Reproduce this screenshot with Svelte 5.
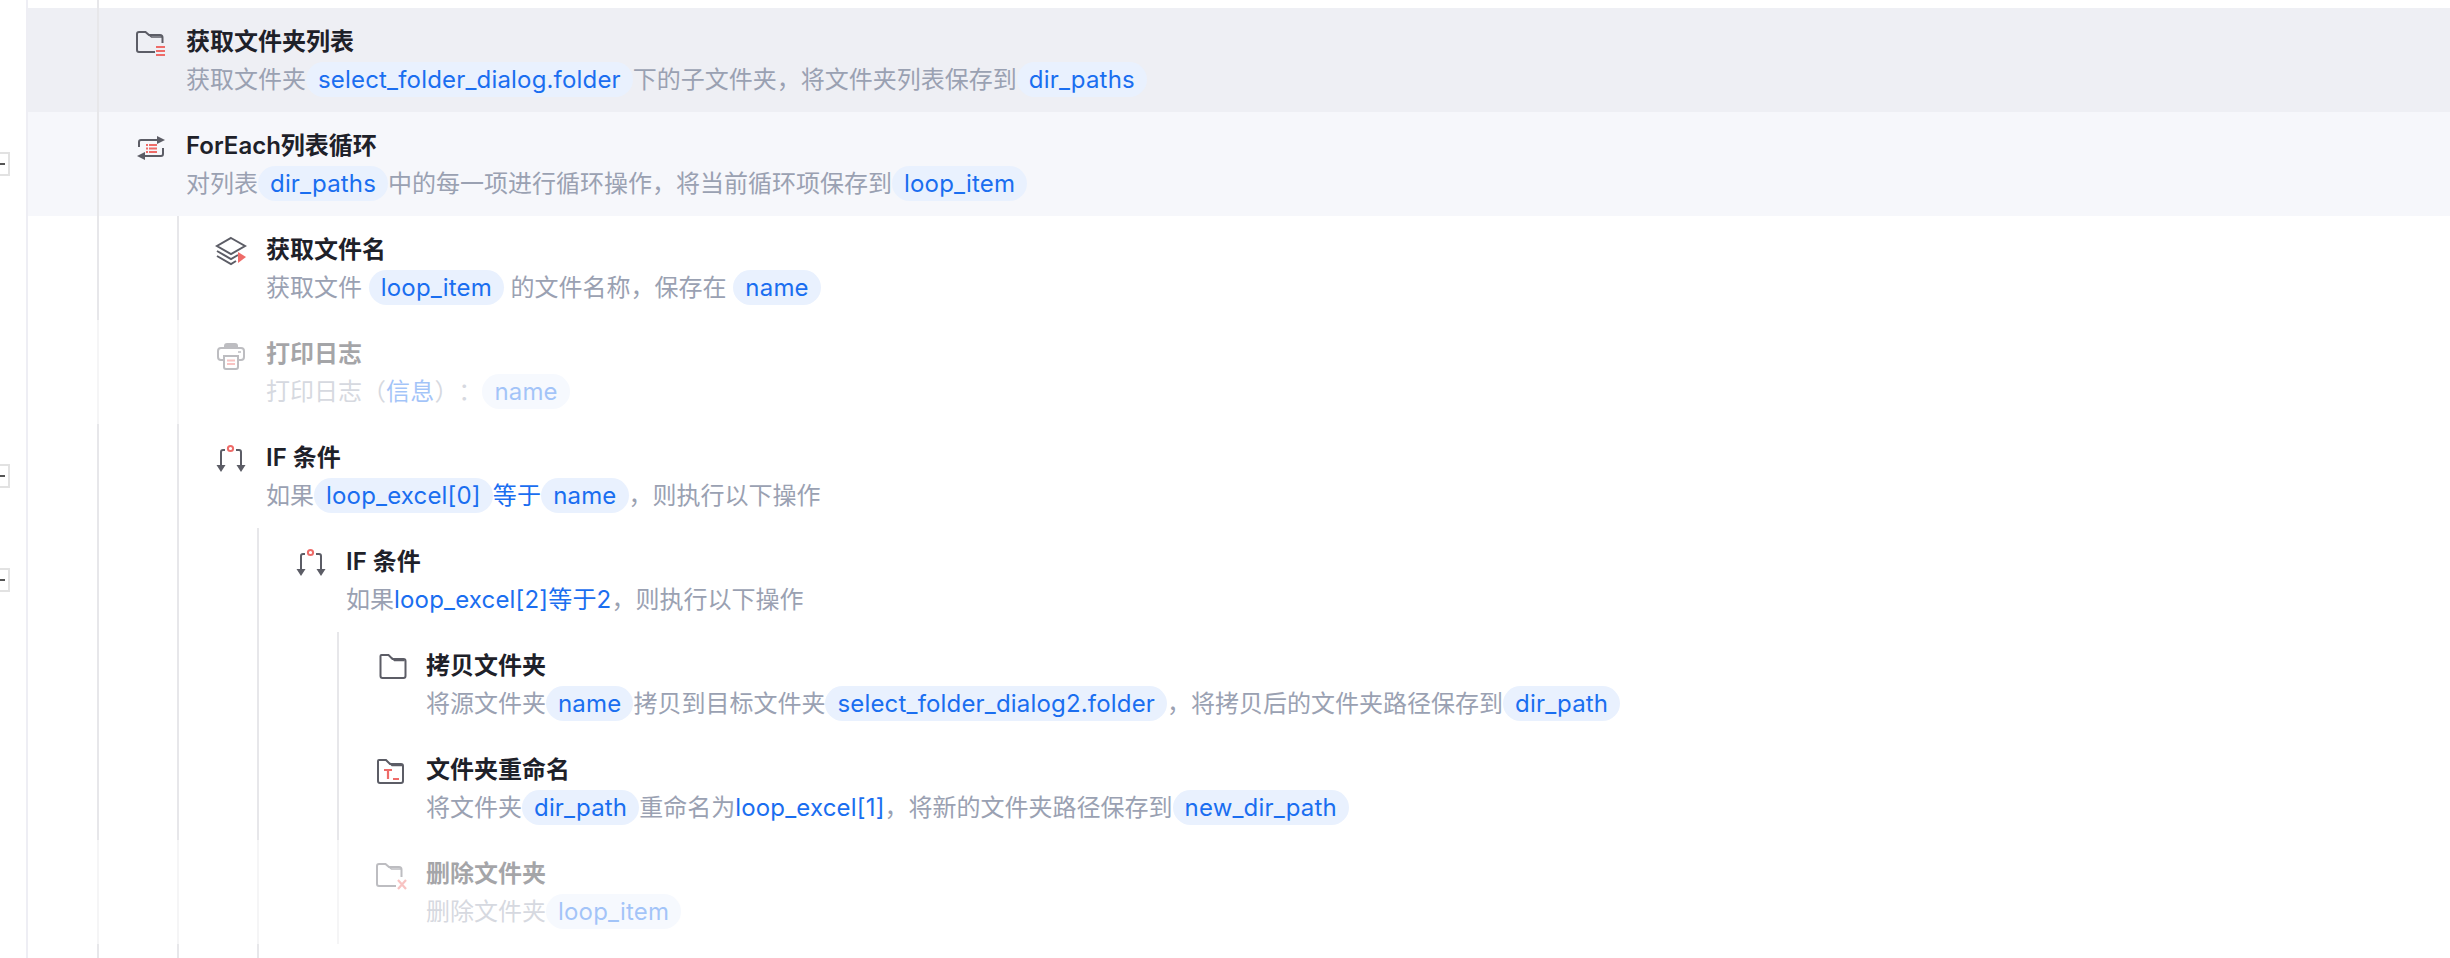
<script>
  // t: text, v: pill, b: plain blue
  const rows = [
    { level: 0, bg: 'sel', icon: 'folderList', title: '获取文件夹列表', desc: [
      ['t', '获取文件夹'], ['v', 'select_folder_dialog.folder'], ['t', '下的子文件夹，将文件夹列表保存到'], ['v', 'dir_paths']
    ] },
    { level: 0, bg: 'hover', fold: true, icon: 'forEach', title: 'ForEach列表循环', desc: [
      ['t', '对列表'], ['v', 'dir_paths'], ['t', '中的每一项进行循环操作，将当前循环项保存到'], ['v', 'loop_item']
    ] },
    { level: 1, icon: 'layers', title: '获取文件名', desc: [
      ['t', '获取文件 '], ['v', 'loop_item'], ['t', ' 的文件名称，保存在 '], ['v', 'name']
    ] },
    { level: 1, off: true, icon: 'printer', title: '打印日志', desc: [
      ['t', '打印日志（'], ['b', '信息'], ['t', '）：'], ['v', 'name']
    ] },
    { level: 1, fold: true, icon: 'ifCond', title: 'IF 条件', desc: [
      ['t', '如果'], ['v', 'loop_excel[0]'], ['b', '等于'], ['v', 'name'], ['t', '，则执行以下操作']
    ] },
    { level: 2, fold: true, icon: 'ifCond', title: 'IF 条件', desc: [
      ['t', '如果'], ['b', 'loop_excel[2]等于2'], ['t', '，则执行以下操作']
    ] },
    { level: 3, icon: 'folder', title: '拷贝文件夹', desc: [
      ['t', '将源文件夹'], ['v', 'name'], ['t', '拷贝到目标文件夹'], ['v', 'select_folder_dialog2.folder'], ['t', '，将拷贝后的文件夹路径保存到'], ['v', 'dir_path']
    ] },
    { level: 3, icon: 'folderRename', title: '文件夹重命名', desc: [
      ['t', '将文件夹'], ['v', 'dir_path'], ['t', '重命名为'], ['b', 'loop_excel[1]'], ['t', '，将新的文件夹路径保存到'], ['v', 'new_dir_path']
    ] },
    { level: 3, off: true, icon: 'folderDelete', title: '删除文件夹', desc: [
      ['t', '删除文件夹'], ['v', 'loop_item']
    ] }
  ];
</script>

{#snippet guides(n)}
  {#each Array(n) as _}
    <div class="guide"></div>
  {/each}
{/snippet}

{#snippet icon(name)}
  <svg class="icon" width="32" height="32" viewBox="0 0 32 32" fill="none" stroke="#5c5d66" stroke-width="2">
    {#if name === 'folderList'}
      <path d="M20 25H4a2 2 0 0 1-2-2V7a2 2 0 0 1 2-2h6.500l3.500 3h11a2.500 2.500 0 0 1 2.500 2.500V16" />
      <path d="M14 8l2.500 2H28" stroke-width="1.500" />
      <path d="M21 20h9M21 24h9M21 28h9" stroke="#ee6b68" stroke-width="2" />
    {:else if name === 'forEach'}
      <path d="M4 16v-5a2 2 0 0 1 2-2h17" />
      <path d="M22 5l8 4-8 4z" fill="#5c5d66" stroke="none" />
      <path d="M28 17v6a2 2 0 0 1-2 2H9" />
      <path d="M10 21l-8 4 8 4z" fill="#5c5d66" stroke="none" />
      <path d="M11 14h2M14 14h8M11 17.500h2M14 17.500h8M11 21h2M14 21h8" stroke="#ee6b68" stroke-width="2" />
    {:else if name === 'layers'}
      <path d="M16 3L30 11 16 19 2 11z" />
      <path d="M2 16l14 8 7-4" />
      <path d="M2 21l14 8 5-3" />
      <path d="M24 14l8 5-8 6z" fill="#ee6b68" stroke="none" transform="translate(-1 3)" />
    {:else if name === 'printer'}
      <path d="M9 9V7a3 3 0 0 1 3-3h8a3 3 0 0 1 3 3v2z" fill="#5c5d66" stroke="none" />
      <path d="M8 21H6a3 3 0 0 1-3-3V12a3 3 0 0 1 3-3h20a3 3 0 0 1 3 3v6a3 3 0 0 1-3 3h-2" />
      <path d="M9 17h14v11a2 2 0 0 1-2 2H11a2 2 0 0 1-2-2z" fill="#fff" />
      <path d="M12 21.500h8M12 25h8" stroke="#ee6b68" />
      <path d="M23 13h3" stroke-width="1.500" />
    {:else if name === 'ifCond'}
      <path d="M6 25V9a2 2 0 0 1 2-2h2M21 7h3a2 2 0 0 1 2 2v16" />
      <path d="M1.500 22h9L6 29zM21.500 22h9L26 29z" fill="#5c5d66" stroke="none" />
      <circle cx="15.500" cy="5.500" r="2.600" stroke="#ee6b68" />
    {:else if name === 'folder'}
      <g transform="translate(1.500 -1)">
        <path d="M5 5h7l4 4h11a2 2 0 0 1 2 2v15a2 2 0 0 1-2 2H6a2 2 0 0 1-2-2V6a1 1 0 0 1 1-1z" />
        <path d="M15.500 8l2.500 2.500h10" stroke-width="1.500" />
      </g>
    {:else if name === 'folderRename'}
      <path d="M4 5h7l4 4h11a2 2 0 0 1 2 2v15a2 2 0 0 1-2 2H5a2 2 0 0 1-2-2V6a1 1 0 0 1 1-1z" />
      <path d="M14.500 8l2.500 2.500h10" stroke-width="1.500" />
      <path d="M9 15h8M13 15v9M18 24h6" stroke="#ee6b68" stroke-width="2.200" />
    {:else if name === 'folderDelete'}
      <path d="M21 27H4a2 2 0 0 1-2-2V7a2 2 0 0 1 2-2h6.500l3.500 3h10a2.500 2.500 0 0 1 2.500 2.500V18" />
      <path d="M14 8l2.500 2H27" stroke-width="1.500" />
      <path d="M23 21l8 9M31 21l-8 9" stroke="#ee6b68" stroke-width="2.200" />
    {/if}
  </svg>
{/snippet}

<div class="page">
  <div class="row top">
    <div class="gutter"></div>
    <div class="body">{@render guides(1)}</div>
  </div>

  {#each rows as r}
    <div class="row">
      <div class="gutter">
        {#if r.fold}<button class="fold" aria-label="折叠"><span></span></button>{/if}
      </div>
      <div class="body {r.bg ?? ''}" class:off={r.off}>
        {@render guides(r.level)}
        <div class="guide item">
          {@render icon(r.icon)}
          <div class="text">
            <div class="title">{r.title}</div>
            <div class="desc">
              {#each r.desc as [kind, s]}
                {#if kind === 'v'}<span class="var">{s}</span>{:else if kind === 'b'}<span class="blue">{s}</span>{:else}{s}{/if}
              {/each}
            </div>
          </div>
        </div>
      </div>
    </div>
  {/each}

  <div class="row bottom">
    <div class="gutter"></div>
    <div class="body">{@render guides(3)}</div>
  </div>
</div>

<style>
  :global(body) {
    background: #fff;
    overflow: hidden;
  }
  .page {
    width: 2450px;
    height: 958px;
    overflow: hidden;
    font-family: Inter, "Noto Sans CJK SC", sans-serif;
    text-spacing-trim: space-all;
  }
  .row {
    display: flex;
    height: 104px;
  }
  .row.top { height: 8px; }
  .row.bottom { height: 14px; }
  .gutter {
    width: 28px;
    flex: none;
    box-sizing: border-box;
    border-right: 2px solid #eeeef4;
    display: flex;
    align-items: center;
  }
  .fold {
    width: 10px;
    height: 24px;
    padding: 0;
    background: #fff;
    border: 2px solid #e2e2e2;
    border-left: none;
    display: flex;
    align-items: center;
  }
  .fold span {
    width: 5px;
    height: 2px;
    background: #555;
  }
  .body {
    flex: 1;
    display: flex;
    box-sizing: border-box;
    padding-left: 69px;
  }
  .body.sel { background: #eeeff4; }
  .body.hover { background: #f6f7fb; }
  .body.off { opacity: 0.4; }
  .guide {
    width: 80px;
    flex: none;
    box-sizing: border-box;
    border-left: 2px solid #e7e7ea;
  }
  .item {
    flex: 1;
    display: flex;
    padding: 19px 0 0 36px;
  }
  .icon {
    flex: none;
    margin-right: 19px;
  }
  .text {
    margin-top: -3px;
  }
  .title {
    font-size: 24px;
    font-weight: 600;
    line-height: 36px;
    color: #1e2129;
  }
  .desc {
    margin-top: 2px;
    font-size: 24px;
    line-height: 36px;
    color: #9aa1b2;
    white-space: pre;
  }
  .var {
    display: inline-block;
    height: 35px;
    line-height: 35px;
    padding: 0 12px;
    border-radius: 18px;
    background: #e9f1fe;
    color: #1a6ef0;
    letter-spacing: 0.18px;
  }
  .blue {
    color: #1a6ef0;
    letter-spacing: 0.18px;
  }
</style>
